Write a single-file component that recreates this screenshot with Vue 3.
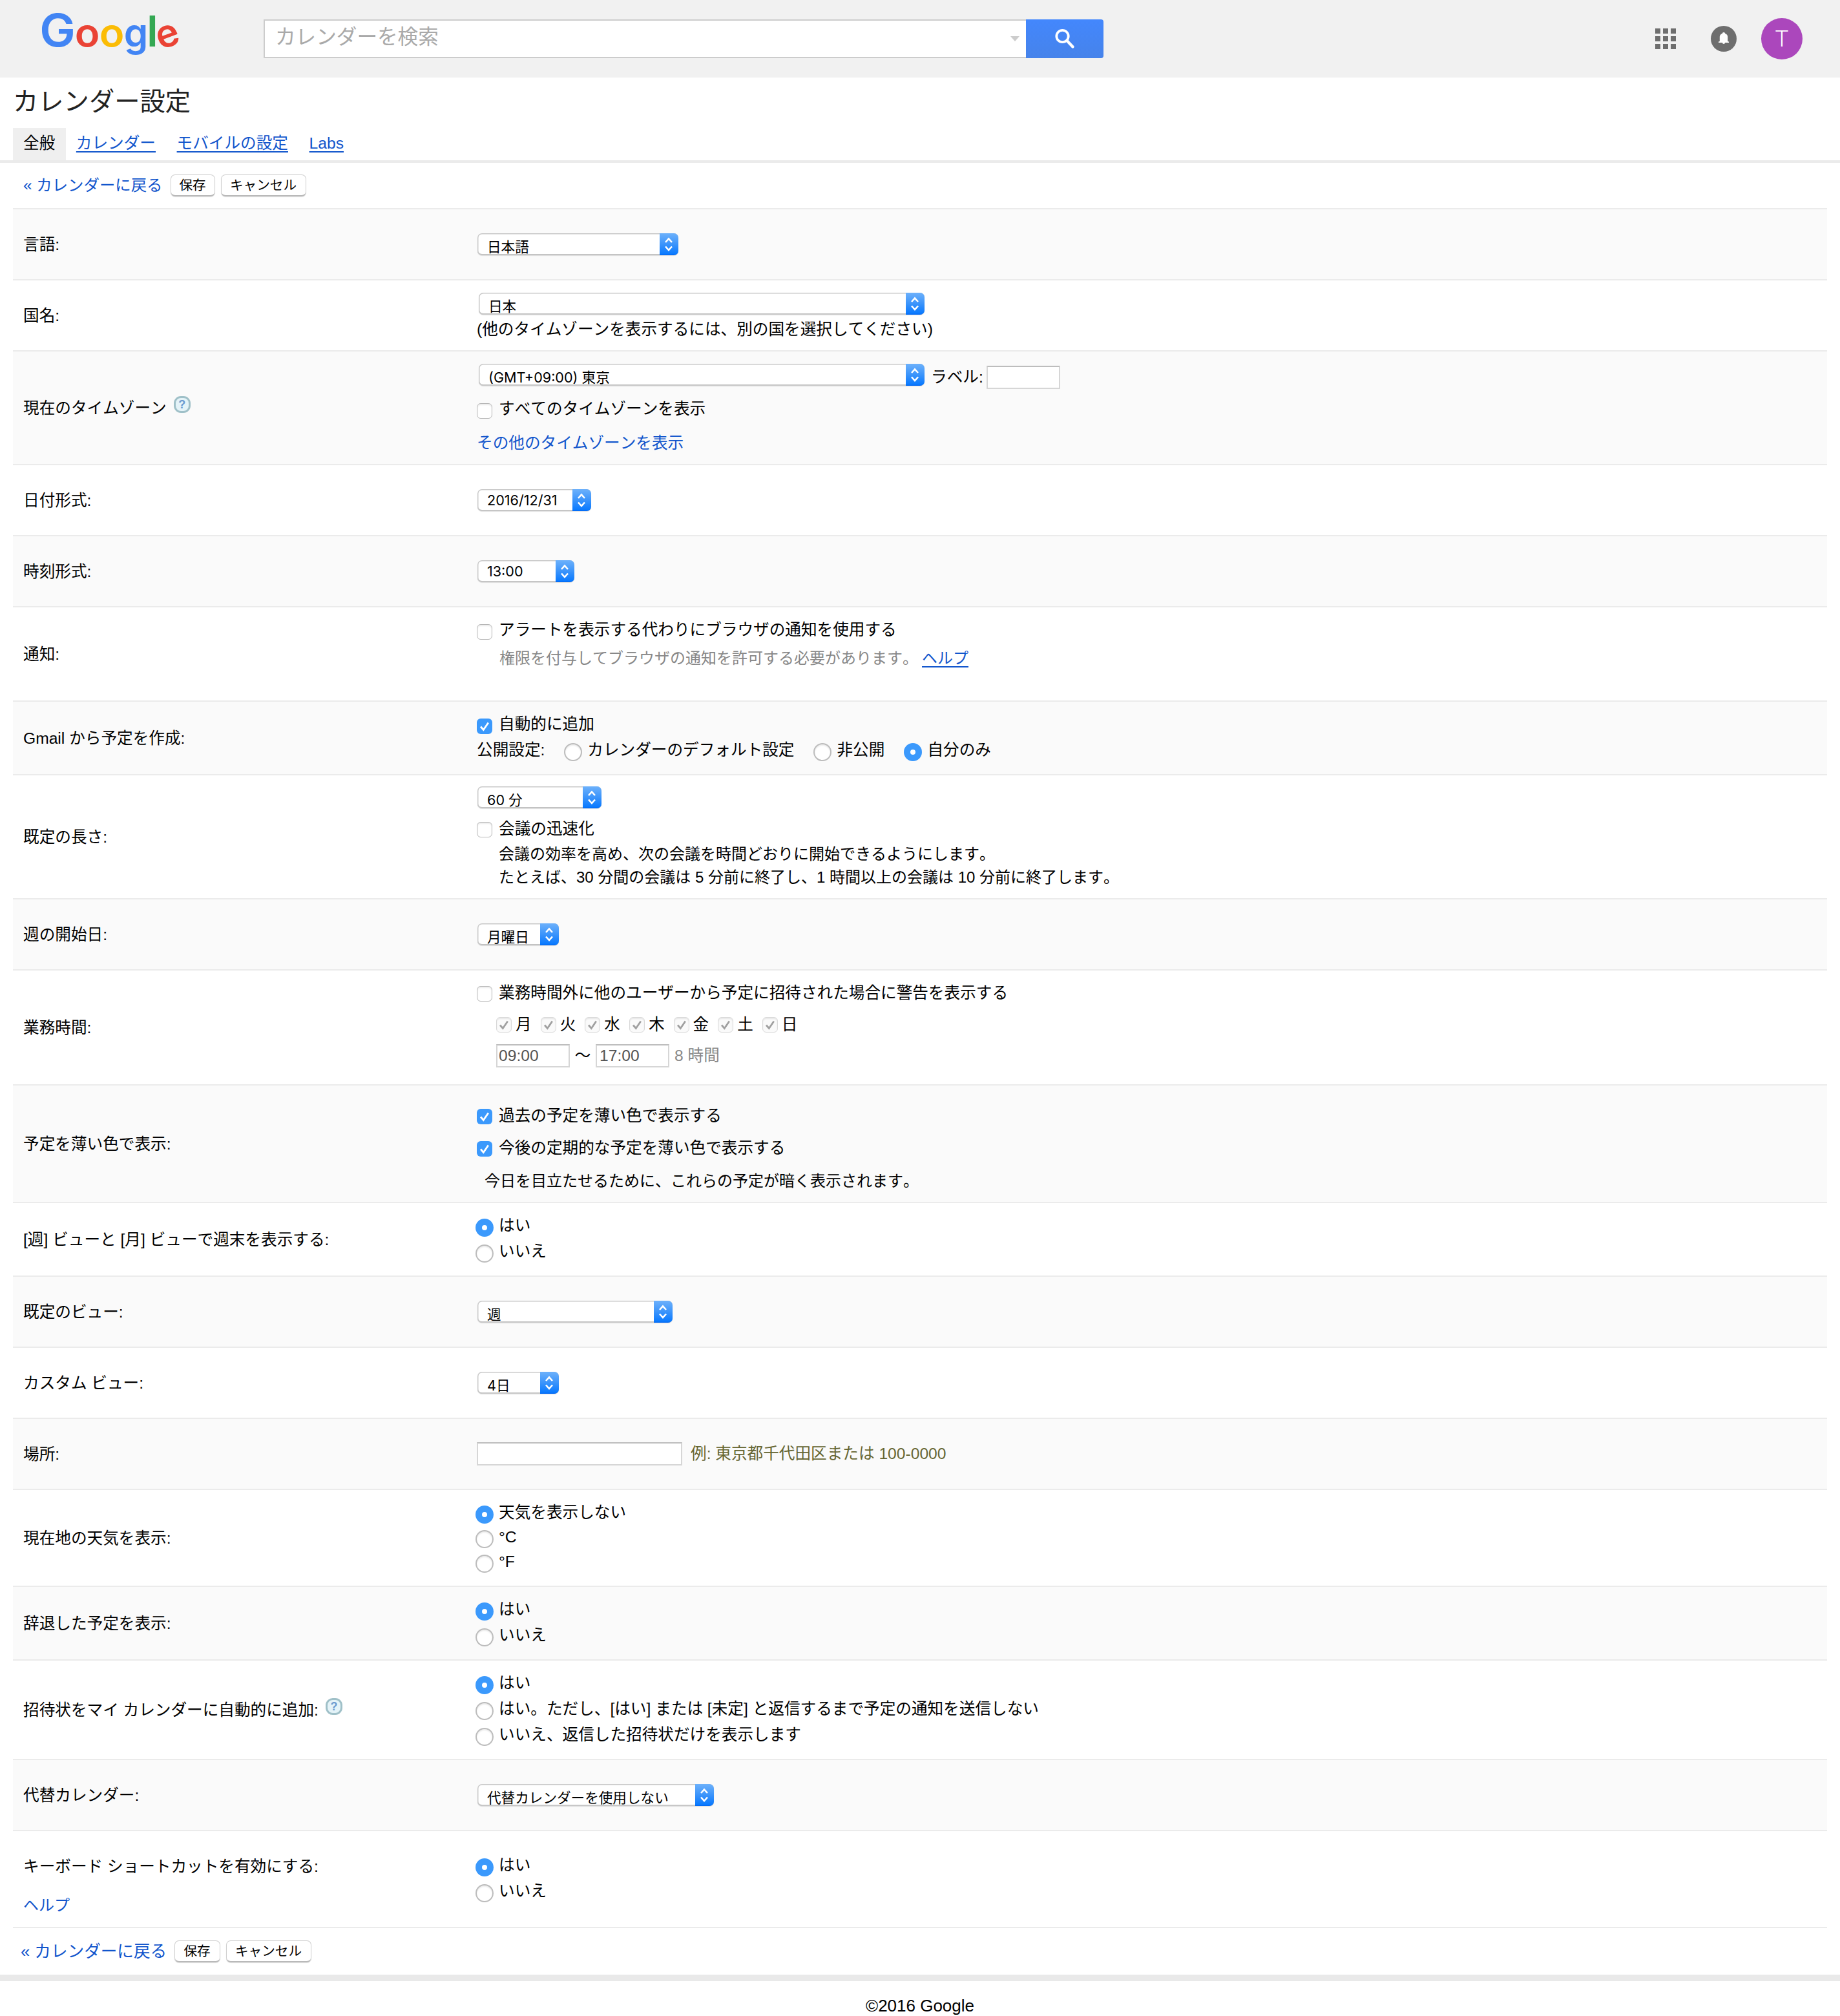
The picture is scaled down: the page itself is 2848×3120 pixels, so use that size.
<script setup>
import { h } from 'vue'

const tabs = [
  { text: '全般', active: true },
  { text: 'カレンダー' },
  { text: 'モバイルの設定' },
  { text: 'Labs' },
]
const days = ['月', '火', '水', '木', '金', '土', '日']

const Pick = (props) =>
  h('span', { class: ['pick', props.latin ? 'latin' : ''], style: { width: props.w + 'px' } }, [
    h('span', { class: 'pick-text' }, props.text),
    h('span', { class: 'pick-cap' }, [
      h('svg', { viewBox: '0 0 28 34', width: 28, height: 34 }, [
        h('path', { d: 'M9 14 L14 8.5 L19 14 M9 20.5 L14 26 L19 20.5', fill: 'none', stroke: '#fff', 'stroke-width': 2.6 }),
      ]),
    ]),
  ])
Pick.props = { text: String, w: Number, latin: Boolean }

const Check = (props) =>
  h('span', { class: ['check', { on: props.on, off: props.off }] }, [
    props.on || props.off
      ? h('svg', { viewBox: '0 0 24 24', width: 24, height: 24 }, [
          h('path', { d: 'M6 12.5 L10.3 17.5 L17.8 6.5', fill: 'none', stroke: props.on ? '#fff' : '#a0a0a0', 'stroke-width': 2.8 }),
        ])
      : null,
  ])
Check.props = { on: Boolean, off: Boolean }

const Radio = (props) => h('span', { class: ['radio', { on: props.on }] })
Radio.props = { on: Boolean }

const Help = () =>
  h('span', { class: 'help' }, [h('span', { class: 'help-mark' }, '?')])
</script>

<template>
  <div class="page">
    <header class="top">
      <div class="logo">
        <svg width="240" height="120" viewBox="50 0 240 120" text-anchor="middle">
          <text class="b" font-size="70" transform="translate(89 72) scale(1.06 1)">G</text>
          <text class="r" font-size="60" transform="translate(135 72) scale(1.06 1)">o</text>
          <text class="y" font-size="60" transform="translate(173 72) scale(1.06 1)">o</text>
          <text class="b" font-size="60" transform="translate(210.5 72)">g</text>
          <text class="n" font-size="66" transform="translate(235.8 72)">l</text>
          <text class="r" font-size="60" transform="translate(259.5 56) rotate(-20) translate(0 16.5)">e</text>
        </svg>
      </div>
      <div class="search">
        <div class="field">
          <span>カレンダーを検索</span>
          <i class="caret"></i>
        </div>
        <div class="go">
          <svg width="32" height="32" viewBox="0 0 32 32"><circle cx="12.5" cy="12" r="9.2" fill="none" stroke="#fff" stroke-width="3.8" /><path d="M19.5 19 L28.5 28.5" stroke="#fff" stroke-width="4.4" stroke-linecap="round" /></svg>
        </div>
      </div>
      <div class="tools">
        <div class="apps"><i v-for="n in 9" :key="n"></i></div>
        <svg class="bell" width="40" height="40" viewBox="0 0 40 40"><circle cx="20" cy="20" r="20" fill="#6e6e6e" /><path d="M20 10 C21.3 10 22 10.8 22 11.8 C25 12.8 26.2 15.2 26.2 17 V24 L28 24.4 V26 H12 V24.4 L13.8 24 V17 C13.8 15.2 15 12.8 18 11.8 C18 10.8 18.7 10 20 10 Z M18 26 H22 A2 2 0 0 1 18 26 Z" fill="#fff" /></svg>
        <div class="avatar">T</div>
      </div>
    </header>

    <h1>カレンダー設定</h1>
    <nav class="tabs">
      <a v-for="t in tabs" :key="t.text" :class="{ active: t.active }">{{ t.text }}</a>
    </nav>

    <div class="actions">
      <a>« カレンダーに戻る</a><button>保存</button><button class="wide">キャンセル</button>
    </div>

    <main>
      <section class="row h110">
        <div class="label">言語:</div>
        <div class="cell mid"><Pick text="日本語" :w="311" /></div>
      </section>
      <section class="row h110">
        <div class="label">国名:</div>
        <div class="cell p16">
          <div class="ln"><Pick class="in2" text="日本" :w="690" /></div>
          <div class="ln">(他のタイムゾーンを表示するには、別の国を選択してください)</div>
        </div>
      </section>
      <section class="row h176">
        <div class="label">現在のタイムゾーン<Help /></div>
        <div class="cell p16">
          <div class="ln"><Pick class="in2" text="(GMT+09:00) 東京" :w="690" /><span class="zone-label">ラベル:</span><span class="box small low"></span></div>
          <div class="ln mt16"><Check /><span class="t up3">すべてのタイムゾーンを表示</span></div>
          <div class="ln mt10"><a>その他のタイムゾーンを表示</a></div>
        </div>
      </section>
      <section class="row h110">
        <div class="label">日付形式:</div>
        <div class="cell mid"><Pick latin text="2016/12/31" :w="176" /></div>
      </section>
      <section class="row h110">
        <div class="label">時刻形式:</div>
        <div class="cell mid"><Pick latin text="13:00" :w="150" /></div>
      </section>
      <section class="row h146">
        <div class="label">通知:</div>
        <div class="cell p18">
          <div class="ln"><Check /><span class="t up3">アラートを表示する代わりにブラウザの通知を使用する</span></div>
          <div class="ln mt1 muted perm">権限を付与してブラウザの通知を許可する必要があります。<a class="u">ヘルプ</a></div>
        </div>
      </section>
      <section class="row h114">
        <div class="label">Gmail から予定を作成:</div>
        <div class="cell p18">
          <div class="ln"><Check on /><span class="t up3">自動的に追加</span></div>
          <div class="ln vis">
            <span class="up3">公開設定:</span>
            <Radio /><span class="t up3">カレンダーのデフォルト設定</span>
            <Radio /><span class="t up3">非公開</span>
            <Radio on /><span class="t up3">自分のみ</span>
          </div>
        </div>
      </section>
      <section class="row h192">
        <div class="label">既定の長さ:</div>
        <div class="cell p14">
          <div class="ln"><Pick text="60 分" :w="192" /></div>
          <div class="ln mt10"><Check /><span class="t up1">会議の迅速化</span></div>
          <p>会議の効率を高め、次の会議を時間どおりに開始できるようにします。<br />たとえば、30 分間の会議は 5 分前に終了し、1 時間以上の会議は 10 分前に終了します。</p>
        </div>
      </section>
      <section class="row h110">
        <div class="label">週の開始日:</div>
        <div class="cell mid"><Pick text="月曜日" :w="126" /></div>
      </section>
      <section class="row h178">
        <div class="label">業務時間:</div>
        <div class="cell p16">
          <div class="ln"><Check /><span class="t up1">業務時間外に他のユーザーから予定に招待された場合に警告を表示する</span></div>
          <div class="ln mt8 days"><template v-for="d in days" :key="d"><Check off /><span>{{ d }}</span></template></div>
          <div class="ln mt8 hours"><span class="box small">09:00</span><span class="wave">～</span><span class="box small second">17:00</span><span class="muted">8 時間</span></div>
        </div>
      </section>
      <section class="row h182">
        <div class="label">予定を薄い色で表示:</div>
        <div class="cell p28">
          <div class="ln"><Check on /><span class="t up1">過去の予定を薄い色で表示する</span></div>
          <div class="ln mt10"><Check on /><span class="t up1">今後の定期的な予定を薄い色で表示する</span></div>
          <div class="ln mt10 note">今日を目立たせるために、これらの予定が暗く表示されます。</div>
        </div>
      </section>
      <section class="row h114">
        <div class="label">[週] ビューと [月] ビューで週末を表示する:</div>
        <div class="cell p18">
          <div class="ln"><Radio on /><span class="t up3">はい</span></div>
          <div class="ln"><Radio /><span class="t up3">いいえ</span></div>
        </div>
      </section>
      <section class="row h110">
        <div class="label">既定のビュー:</div>
        <div class="cell mid"><Pick text="週" :w="302" /></div>
      </section>
      <section class="row h110">
        <div class="label">カスタム ビュー:</div>
        <div class="cell mid"><Pick text="4日" :w="126" /></div>
      </section>
      <section class="row h110">
        <div class="label">場所:</div>
        <div class="cell mid place"><span class="box"></span><span class="hint">例: 東京都千代田区または 100-0000</span></div>
      </section>
      <section class="row h150">
        <div class="label">現在地の天気を表示:</div>
        <div class="cell p18 weather">
          <div class="ln"><Radio on /><span class="t up3">天気を表示しない</span></div>
          <div class="ln"><Radio /><span class="t up3">°C</span></div>
          <div class="ln"><Radio /><span class="t up3">°F</span></div>
        </div>
      </section>
      <section class="row h114">
        <div class="label">辞退した予定を表示:</div>
        <div class="cell p18">
          <div class="ln"><Radio on /><span class="t up3">はい</span></div>
          <div class="ln"><Radio /><span class="t up3">いいえ</span></div>
        </div>
      </section>
      <section class="row h154">
        <div class="label">招待状をマイ カレンダーに自動的に追加:<Help /></div>
        <div class="cell p18">
          <div class="ln"><Radio on /><span class="t up3">はい</span></div>
          <div class="ln"><Radio /><span class="t up3">はい。ただし、[はい] または [未定] と返信するまで予定の通知を送信しない</span></div>
          <div class="ln"><Radio /><span class="t up3">いいえ、返信した招待状だけを表示します</span></div>
        </div>
      </section>
      <section class="row h110">
        <div class="label">代替カレンダー:</div>
        <div class="cell mid"><Pick text="代替カレンダーを使用しない" :w="366" /></div>
      </section>
      <section class="row h150">
        <div class="label stack"><span>キーボード ショートカットを有効にする:</span><a>ヘルプ</a></div>
        <div class="cell p36">
          <div class="ln"><Radio on /><span class="t up3">はい</span></div>
          <div class="ln"><Radio /><span class="t up3">いいえ</span></div>
        </div>
      </section>
    </main>

    <div class="actions bottom">
      <a>« カレンダーに戻る</a><button>保存</button><button class="wide">キャンセル</button>
    </div>
    <footer>©2016 Google</footer>
  </div>
</template>

<style>
html, body { margin: 0; background: #fff; }
.pick {
  box-sizing: border-box; display: inline-flex; flex: none; height: 34px; margin-left: 1px;
  background: #fff; border-radius: 7px; overflow: hidden; color: #000;
  box-shadow: inset 0 0 0 1.5px #c9c9c9, inset 0 -2px 0 #b9b9b9, 0 1px 1px rgba(0, 0, 0, .12);
  font: 21.6px/34px Inter, "Noto Sans CJK JP", sans-serif; white-space: nowrap;
}
.pick.in2 { margin-left: 3px; }
.pick-text { flex: 1; padding-left: 15px; padding-top: 4px; height: 34px; }
.pick.latin .pick-text { padding-top: 0; }
.pick-cap { flex: none; width: 29px; height: 34px; background: linear-gradient(#6db1fb, #3b94fb 50%, #0a7aff 94%, #0064f0); }
.pick-cap svg { display: block; }
.check {
  box-sizing: border-box; flex: none; width: 24px; height: 24px; border-radius: 6px; background: #fff;
  border: 1.5px solid #b5b5b5; box-shadow: inset 0 2px 2px rgba(0, 0, 0, .08);
}
.check svg { display: block; margin: -1px; }
.check.on { border: 0; background: #3b99fc; box-shadow: none; }
.check.on svg { margin: 0; }
.check.off { border-color: #d9d9d9; background: #fafafa; }
.radio {
  box-sizing: border-box; flex: none; width: 28px; height: 28px; margin: 0 -2px; border-radius: 50%;
  background: #fff; border: 2px solid #bcbcbc; box-shadow: inset 0 2px 2px rgba(0, 0, 0, .08);
}
.radio.on { border: 10px solid #3b99fc; box-shadow: none; }
.help {
  box-sizing: border-box; display: inline-flex; align-items: center; justify-content: center; flex: none;
  width: 26px; height: 26px; margin: -13px 0 0 11px; border-radius: 11px; border: 3px solid #9fc0c8; background: #e4f3f8;
}
.help-mark { font: bold 18px/20px "Liberation Sans", sans-serif; color: #6b9bd0; }
</style>

<style scoped>
.page {
  width: 2848px; height: 3120px; overflow: hidden; background: #fff; color: #000;
  font: 24.64px/40px "Liberation Sans", "Noto Sans CJK JP", sans-serif; white-space: nowrap; font-kerning: none;
}
a { color: #15c; text-decoration: none; }
.u { text-decoration: underline; text-decoration-thickness: 2px; text-underline-offset: 4px; }
.top { height: 120px; background: #f1f1f1; display: flex; }
.logo { width: 358px; padding-left: 50px; height: 120px; }
.logo svg { display: block; }
.logo text { font-family: Inter, sans-serif; font-weight: 600; }
.b { fill: #4285f4; } .r { fill: #ea4335; } .y { fill: #fbbc05; } .n { fill: #34a853; }
.search { display: flex; height: 60px; margin-top: 30px; }
.field {
  box-sizing: border-box; width: 1180px; border: 2px solid #ccc; border-right: 0; background: #fff; display: flex;
  align-items: center; justify-content: space-between; padding: 0 10px 0 16px; font-size: 31.6px; color: #a9a9a9;
}
.field span { margin-bottom: 7px; }
.caret { border: 7px solid transparent; border-top: 8px solid #ccc; border-bottom: 0; }
.go {
  width: 120px; border-radius: 0 4px 4px 0; background: linear-gradient(#4387fd, #4683ea);
  display: flex; align-items: center; justify-content: center;
}
.tools { margin-left: auto; display: flex; align-items: center; padding-right: 58px; }
.apps { display: grid; grid-template-columns: repeat(3, 8px); gap: 4px; margin-right: 54px; }
.apps i { height: 8px; background: #6e6e6e; }
.bell { margin-right: 38px; }
.avatar { width: 64px; height: 64px; border-radius: 50%; background: #ab47bc; color: #fff; font: 300 35px/66px Roboto, sans-serif; text-align: center; }
h1 { margin: 0; height: 78px; padding: 0 20px; font-size: 39.3px; line-height: 74px; font-weight: 400; color: #222; }
.tabs { height: 50px; border-bottom: 4px solid #ebebeb; padding-left: 20px; display: flex; line-height: 48px; }
.tabs a { padding: 0 16.6px 0 16px; text-decoration: underline; text-decoration-thickness: 2px; text-underline-offset: 4px; }
.tabs a.active { color: #000; background: #efefef; text-decoration: none; }
.actions { height: 70px; padding-left: 36px; display: flex; align-items: center; }
.actions a { width: 227.5px; font-size: 24.4px; }
button {
  box-sizing: border-box; width: 69px; height: 34px; padding: 0; margin: 0 9px 0 0; border: 1.5px solid #cfcfcf; border-bottom: 2px solid #b9b9b9;
  border-radius: 7px; background: #fff; font: 20.6px/31px "Liberation Sans", "Noto Sans CJK JP", sans-serif; color: #000;
  box-shadow: 0 1px 1px rgba(0, 0, 0, .12);
}
button.wide { width: 132px; }
.bottom { padding-left: 32px; height: 72px; border-bottom: 10px solid #e9e9e9; }
.bottom a { width: 237.5px; font-size: 25.6px; }
.bottom button { width: 71px; }
.bottom button.wide { width: 132px; }
footer { text-align: center; font-size: 26px; line-height: 76px; }
main { margin: 0 20px; border-bottom: 2px solid #ebebeb; }
.row { box-sizing: border-box; border-top: 2px solid #ebebeb; display: flex; }
.row:nth-child(odd) { background: #fafafa; }
.h110 { height: 110px; } .h114 { height: 114px; } .h146 { height: 146px; } .h150 { height: 150px; } .h154 { height: 154px; }
.h176 { height: 176px; } .h178 { height: 178px; } .h182 { height: 182px; } .h192 { height: 192px; }
.label { width: 702px; padding-left: 16px; padding-top: 2px; display: flex; align-items: center; }
.label.stack { flex-direction: column; align-items: flex-start; line-height: 60px; padding-top: 25px; }
.label.stack a { font-size: 24px; }
.cell { flex: 1; }
.mid { display: flex; align-items: center; }
.ln { display: flex; align-items: center; height: 40px; }
.t { margin-left: 10px; }
.up3 { margin-bottom: 6px; }
.up1 { margin-bottom: 2px; }
.p14 { padding-top: 14px; } .p16 { padding-top: 16px; } .p18 { padding-top: 18px; } .p28 { padding-top: 28px; } .p36 { padding-top: 36px; }
.mt1 { margin-top: 1px; } .mt8 { margin-top: 8px; } .mt10 { margin-top: 10px; } .mt16 { margin-top: 16px; }
p { margin: 0; padding-left: 34px; font-size: 24px; line-height: 36px; }
.muted { color: #888; }
.perm { padding-left: 35px; font-size: 24px; }
.perm a { margin-left: 6px; }
.vis .radio { margin-left: 30px; }
.days { padding-left: 30px; }
.days span:not(.check) { margin: 0 14px 0 6px; }
.hours { padding-left: 30px; }
.box {
  box-sizing: border-box; width: 318px; height: 36px; border: 2px solid #d6d6d6; border-top-color: #bdbdbd; background: #fff;
  line-height: 32px; padding-left: 2px; color: #545454;
}
.box.small { width: 114px; }
.box.low { margin-top: 8px; margin-left: 5px; }
.zone-label { margin: 7px 0 0 10px; }
.wave { margin: 0 7.7px; }
.second { padding-left: 4px; }
.hours .muted { margin-left: 8px; }
.note { padding-left: 12px; font-size: 24px; }
.hint { margin-left: 13px; color: #663; }
.weather .ln + .ln { margin-top: -2px; }
</style>
